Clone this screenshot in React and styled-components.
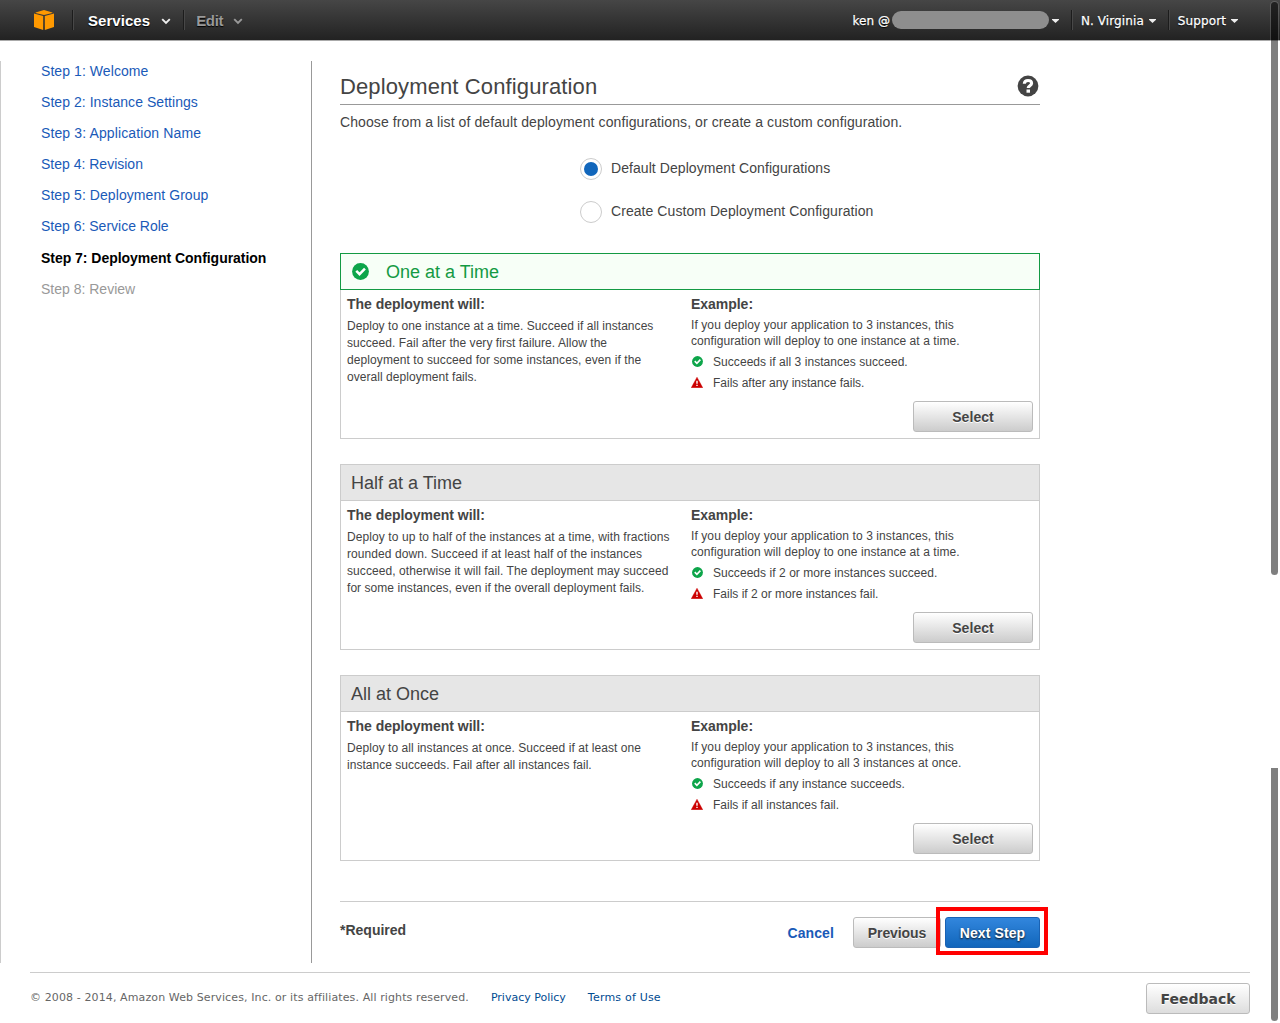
import React from "react";
import styled, { createGlobalStyle, css } from "styled-components";

const GlobalStyle = createGlobalStyle`
  *, *::before, *::after { box-sizing: border-box; }
  body {
    margin: 0;
    background: #fff;
    color: #444;
    font-family: "Liberation Sans", Helvetica, Arial, sans-serif;
    font-size: 14px;
    overflow: hidden;
  }
  h1, h2, h3, p, ul { margin: 0; padding: 0; font-weight: normal; }
  button { font-family: inherit; }
`;

const Page = styled.div`
  position: relative;
  width: 1280px;
  height: 1023px;
  display: flex;
  flex-direction: column;
`;

/* ---------- top bar ---------- */

const TopBar = styled.header`
  display: flex;
  align-items: center;
  justify-content: space-between;
  height: 41px;
  padding: 0 42px 1px 34px;
  background: linear-gradient(#464646, #222);
  border-bottom: 1px solid #aaa;
  flex: none;
`;

const NavGroup = styled.nav`
  display: flex;
  align-items: center;
  height: 40px;
`;

const NavDivider = styled.span`
  width: 2px;
  height: 20px;
  margin: 0 ${(p) => p.$after}px 0 ${(p) => p.$before}px;
  border-left: 1px solid #1c1c1c;
  border-right: 1px solid #484848;
`;

const MenuLabel = styled.span`
  font-weight: bold;
  font-size: 15px;
  line-height: 20px;
  letter-spacing: ${(p) => p.$spacing || 0}px;
  color: ${(p) => (p.$muted ? "#999" : "#fff")};
  text-shadow: 0 1px 1px #000;
  padding-top: 2px;
`;

const AccountLabel = styled.span`
  font-family: "DejaVu Sans", Verdana, sans-serif;
  font-size: 12px;
  line-height: 20px;
  padding-top: 2px;
  letter-spacing: ${(p) => p.$spacing || 0}px;
  color: #fff;
  text-shadow: 0 1px 1px #000;
  -webkit-text-stroke: 0.25px #fff;
`;

const Redacted = styled.span`
  width: 157px;
  height: 18px;
  margin: 1px 3px 0 2px;
  border-radius: 9px;
  background: #8e8e8e;
`;

const Icon = styled.svg`
  display: block;
  flex: none;
`;

const Logo = styled(Icon)`
  margin-top: 1px;
`;

const ChevronIcon = styled(Icon)`
  margin-left: ${(p) => p.$gap}px;
  margin-top: 3px;
`;

const CaretIcon = styled(Icon)`
  margin-left: ${(p) => p.$gap || 0}px;
  margin-top: 2px;
`;

const Chevron = ({ color, gap }) => (
  <ChevronIcon width="10" height="7" viewBox="0 0 10 7" $gap={gap}>
    <path d="M1.2 1.2L5 5l3.8-3.8" fill="none" stroke={color} strokeWidth="1.9" />
  </ChevronIcon>
);

const Caret = ({ gap }) => (
  <CaretIcon width="7" height="4" viewBox="0 0 7 4" $gap={gap}>
    <path d="M0 0h7v.8L3.5 4 0 .8z" fill="#eee" />
  </CaretIcon>
);

const CubeLogo = () => (
  <Logo width="20" height="20" viewBox="0 0 20 20">
    <g fill="#f90">
      <path d="M10 0l8.400 2.400v.5L10 5 1.600 2.900v-.5z" />
      <path d="M0 3.600l9.200 2.500V20L0 17z" />
      <path d="M20 3.600l-9.200 2.500V20L20 17z" />
    </g>
  </Logo>
);

/* ---------- wizard layout ---------- */

const Wizard = styled.main`
  display: flex;
  height: 902px;
  margin-top: 20px;
  flex: none;
`;

const Sidebar = styled.ul`
  width: 312px;
  padding-left: 40px;
  border-left: 1px solid #ccc;
  border-right: 1px solid #999;
  list-style: none;
  display: flex;
  flex-direction: column;
  gap: 10px;
`;

const Step = styled.li`
  height: 21px;
  line-height: 21px;
  white-space: nowrap;
  letter-spacing: ${(p) => p.$spacing || 0}px;
  color: #1a5ab8;
  ${(p) => p.$state === "current" && css`
    margin-top: 1px;
    color: #000;
    font-weight: bold;
  `}
  ${(p) => p.$state === "disabled" && css`color: #999;`}
`;

const Content = styled.section`
  width: 700px;
  margin-left: 28px;
  display: flex;
  flex-direction: column;
`;

const TitleRow = styled.div`
  display: flex;
  align-items: center;
  justify-content: space-between;
  height: 44px;
  padding: 7px 1px 0 0;
  border-bottom: 1px solid #999;
`;

const Title = styled.h1`
  font-size: 22px;
  line-height: 28px;
  letter-spacing: 0.12px;
  padding-top: 1px;
`;

const Intro = styled.p`
  margin-top: 8px;
  line-height: 18px;
  letter-spacing: 0.1px;
`;

const Choices = styled.div`
  display: flex;
  flex-direction: column;
  gap: 21px;
  margin: 27px 0 0 240px;
`;

const Choice = styled.label`
  display: flex;
  align-items: center;
  gap: 9px;
  height: 22px;
`;

const ChoiceText = styled.span`
  padding-bottom: 2px;
  white-space: nowrap;
  letter-spacing: 0.065px;
`;

const Radio = styled.span`
  display: grid;
  place-items: center;
  width: 22px;
  height: 22px;
  border: 1px solid #ccc;
  border-radius: 50%;
  background: #fff;
`;

const RadioDot = styled.span`
  width: 14px;
  height: 14px;
  border-radius: 50%;
  background: #1166bb;
`;

/* ---------- deployment cards ---------- */

const CardList = styled.div`
  display: flex;
  flex-direction: column;
  gap: 25px;
  margin-top: 30px;
`;

const Card = styled.article`
  display: flex;
  flex-direction: column;
  height: 186px;
`;

const CardHeader = styled.header`
  display: flex;
  align-items: center;
  gap: 16px;
  height: 37px;
  padding: 0 10px 0 ${(p) => (p.$selected ? 11 : 10)}px;
  border: 1px solid ${(p) => (p.$selected ? "#139a43" : "#ccc")};
  background: ${(p) => (p.$selected ? "#f7fff7" : "#e6e6e6")};
  color: ${(p) => (p.$selected ? "#139a43" : "#444")};

  svg { margin: 0 1px 1px 0; }
`;

const CardTitle = styled.h2`
  font-size: 18px;
  line-height: 24px;
`;

const CardBody = styled.div`
  flex: 1;
  display: flex;
  padding: 5px 6px 6px;
  border: 1px solid #ccc;
  border-top: 0;
`;

const Behaviour = styled.div`
  width: 344px;
`;

const Example = styled.div`
  flex: 1;
  display: flex;
  flex-direction: column;
`;

const Heading = styled.h3`
  font-size: 14px;
  font-weight: bold;
  line-height: 18px;
  letter-spacing: -0.03px;
`;

const TextLine = styled.p`
  font-size: 12px;
  line-height: ${(p) => p.$leading}px;
  letter-spacing: ${(p) => p.$spacing || 0}px;
  white-space: nowrap;
`;

const TextBlock = styled.div`
  padding-top: ${(p) => p.$top}px;
`;

const Outcomes = styled.div`
  display: flex;
  flex-direction: column;
  padding-top: 2px;
`;

const Outcome = styled.div`
  display: flex;
  align-items: center;
  height: 21px;
`;

const OutcomeIcon = styled.span`
  display: grid;
  place-items: center;
  width: 12px;
  margin-right: 10px;
`;

const Button = styled.button`
  height: 31px;
  width: ${(p) => p.$width}px;
  padding: 0;
  border: 1px solid #bbb;
  border-radius: 3px;
  background: linear-gradient(#fff, #ccc);
  color: #444;
  font-size: 14px;
  font-weight: bold;
  letter-spacing: ${(p) => p.$spacing || 0}px;
  text-shadow: 0 1px 0 #fff;
  flex: none;
  ${(p) => p.$primary && css`
    border-color: #1a62b3;
    background: linear-gradient(#3286dd, #1166bb);
    color: #fff;
    text-shadow: 0 1px 2px #111;
  `}
`;

const SelectButton = styled(Button)`
  align-self: flex-end;
  margin-top: auto;
`;

const CheckCircle = ({ size }) => (
  <Icon width={size} height={size} viewBox="0 0 18 18">
    <circle cx="9" cy="9" r="8.900" fill="#0da54a" />
    <path d="M4.500 8.300l3.500 3.500 5.700-5.800" fill="none" stroke="#fff" strokeWidth="2.700" />
  </Icon>
);

const Warning = () => (
  <Icon width="12" height="11" viewBox="0 0 12 11">
    <path d="M6 0.200L11.800 10.800H.2z" fill="#c00" stroke="#c00" strokeWidth=".4" strokeLinejoin="round" />
    <path d="M5.300 3.800h1.400v3H5.300zM5.300 7.800h1.400v1.300H5.300z" fill="#fff" />
  </Icon>
);

const HelpIcon = () => (
  <Icon width="22" height="22" viewBox="0 0 22 22">
    <circle cx="11" cy="11" r="10.400" fill="#444" />
    <path d="M7.300 8.700c.1-2.200 1.500-3.200 3.700-3.200s3.600 1 3.600 2.700c0 2.500-3.400 2.400-3.400 4.900" fill="none" stroke="#fff" strokeWidth="3.100" />
    <path d="M9.500 14.500h3.500v3.200H9.500z" fill="#fff" />
  </Icon>
);

/* ---------- wizard actions ---------- */

const ActionRow = styled.div`
  display: flex;
  justify-content: space-between;
  margin-top: 40px;
  padding-top: 15px;
  border-top: 1px solid #ccc;
  font-weight: bold;
`;

const Required = styled.span`
  padding-top: 4px;
  line-height: 18px;
`;

const Actions = styled.div`
  display: flex;
  align-items: center;
`;

const CancelLink = styled.a`
  margin-right: 19px;
  letter-spacing: 0.1px;
  color: #1a5ab8;
`;

const NextWrap = styled.div`
  position: relative;
  margin-left: 4px;
`;

const Highlight = styled.span`
  position: absolute;
  inset: -10px -8px -7px -9px;
  border: 4px solid #f00;
`;

/* ---------- footer ---------- */

const Footer = styled.footer`
  display: flex;
  align-items: flex-start;
  margin: 9px 30px 0;
  border-top: 1px solid #ccc;
  font-family: "DejaVu Sans", Verdana, sans-serif;
  font-size: 11px;
  color: #666;
`;

const FooterText = styled.span`
  margin: 16px 22px 0 0;
  line-height: 17px;
  letter-spacing: ${(p) => p.$spacing || 0}px;
  white-space: nowrap;
  ${(p) => p.$link && css`color: #004b91;`}
`;

const FeedbackButton = styled(Button)`
  margin: 10px 0 0 auto;
  background: linear-gradient(#fff, #ddd);
  font-family: "DejaVu Sans", Verdana, sans-serif;
`;

const ScrollThumb = styled.span`
  position: absolute;
  right: 2px;
  top: ${(p) => p.$top}px;
  width: 7px;
  height: ${(p) => p.$height}px;
  border-radius: ${(p) => (p.$flatTop ? "0 0 4px 4px" : "4px")};
  background: rgba(0, 0, 0, 0.5);
  box-shadow: 0 0 0 1px rgba(255, 255, 255, 0.15);
`;

const steps = [
  { text: "Step 1: Welcome", spacing: 0.07 },
  { text: "Step 2: Instance Settings", spacing: 0.05 },
  { text: "Step 3: Application Name", spacing: 0.12 },
  { text: "Step 4: Revision", spacing: 0 },
  { text: "Step 5: Deployment Group", spacing: 0.07 },
  { text: "Step 6: Service Role", spacing: 0 },
  { text: "Step 7: Deployment Configuration", spacing: -0.03, state: "current" },
  { text: "Step 8: Review", spacing: 0, state: "disabled" },
];

const configurations = [
  {
    title: "One at a Time",
    selected: true,
    behaviour: [
      ["Deploy to one instance at a time. Succeed if all instances", 0.05],
      ["succeed. Fail after the very first failure. Allow the", 0.05],
      ["deployment to succeed for some instances, even if the", 0.09],
      ["overall deployment fails.", 0.05],
    ],
    example: [
      ["If you deploy your application to 3 instances, this", 0.09],
      ["configuration will deploy to one instance at a time.", 0.075],
    ],
    success: "Succeeds if all 3 instances succeed.",
    failure: "Fails after any instance fails.",
  },
  {
    title: "Half at a Time",
    behaviour: [
      ["Deploy to up to half of the instances at a time, with fractions", 0.09],
      ["rounded down. Succeed if at least half of the instances", 0.075],
      ["succeed, otherwise it will fail. The deployment may succeed", 0.07],
      ["for some instances, even if the overall deployment fails.", 0.045],
    ],
    example: [
      ["If you deploy your application to 3 instances, this", 0.09],
      ["configuration will deploy to one instance at a time.", 0.075],
    ],
    success: "Succeeds if 2 or more instances succeed.",
    failure: "Fails if 2 or more instances fail.",
  },
  {
    title: "All at Once",
    behaviour: [
      ["Deploy to all instances at once. Succeed if at least one", 0.055],
      ["instance succeeds. Fail after all instances fail.", 0.025],
    ],
    example: [
      ["If you deploy your application to 3 instances, this", 0.09],
      ["configuration will deploy to all 3 instances at once.", 0.08],
    ],
    success: "Succeeds if any instance succeeds.",
    failure: "Fails if all instances fail.",
  },
];

const ConfigurationCard = ({ config }) => (
  <Card>
    <CardHeader $selected={config.selected}>
      {config.selected && <CheckCircle size={17} />}
      <CardTitle>{config.title}</CardTitle>
    </CardHeader>
    <CardBody>
      <Behaviour>
        <Heading>The deployment will:</Heading>
        <TextBlock $top={5}>
          {config.behaviour.map(([line, spacing]) => (
            <TextLine key={line} $leading={17} $spacing={spacing}>{line}</TextLine>
          ))}
        </TextBlock>
      </Behaviour>
      <Example>
        <Heading>Example:</Heading>
        <TextBlock $top={4}>
          {config.example.map(([line, spacing]) => (
            <TextLine key={line} $leading={16} $spacing={spacing}>{line}</TextLine>
          ))}
        </TextBlock>
        <Outcomes>
          <Outcome>
            <OutcomeIcon><CheckCircle size={11} /></OutcomeIcon>
            <TextLine $leading={16} $spacing={0.055}>{config.success}</TextLine>
          </Outcome>
          <Outcome>
            <OutcomeIcon><Warning /></OutcomeIcon>
            <TextLine $leading={16}>{config.failure}</TextLine>
          </Outcome>
        </Outcomes>
        <SelectButton $width={120} $spacing={0.05}>Select</SelectButton>
      </Example>
    </CardBody>
  </Card>
);

export default function App() {
  return (
    <Page>
      <GlobalStyle />
      <TopBar>
        <NavGroup>
          <CubeLogo />
          <NavDivider $before={18} $after={14} />
          <MenuLabel $spacing={0.05}>Services</MenuLabel>
          <Chevron color="#eee" gap={11} />
          <NavDivider $before={12} $after={11} />
          <MenuLabel $muted $spacing={-0.3}>Edit</MenuLabel>
          <Chevron color="#999" gap={10} />
        </NavGroup>
        <NavGroup>
          <AccountLabel>ken @</AccountLabel>
          <Redacted />
          <Caret />
          <NavDivider $before={12} $after={8} />
          <AccountLabel $spacing={0.1}>N. Virginia</AccountLabel>
          <Caret gap={5} />
          <NavDivider $before={12} $after={8} />
          <AccountLabel $spacing={0.1}>Support</AccountLabel>
          <Caret gap={5} />
        </NavGroup>
      </TopBar>
      <Wizard>
        <Sidebar>
          {steps.map((step) => (
            <Step key={step.text} $state={step.state} $spacing={step.spacing}>{step.text}</Step>
          ))}
        </Sidebar>
        <Content>
          <TitleRow>
            <Title>Deployment Configuration</Title>
            <HelpIcon />
          </TitleRow>
          <Intro>Choose from a list of default deployment configurations, or create a custom configuration.</Intro>
          <Choices>
            <Choice>
              <Radio><RadioDot /></Radio>
              <ChoiceText>Default Deployment Configurations</ChoiceText>
            </Choice>
            <Choice>
              <Radio />
              <ChoiceText>Create Custom Deployment Configuration</ChoiceText>
            </Choice>
          </Choices>
          <CardList>
            {configurations.map((config) => (
              <ConfigurationCard key={config.title} config={config} />
            ))}
          </CardList>
          <ActionRow>
            <Required>*Required</Required>
            <Actions>
              <CancelLink>Cancel</CancelLink>
              <Button $width={88} $spacing={-0.1}>Previous</Button>
              <NextWrap>
                <Button $width={95} $primary $spacing={0.1}>Next Step</Button>
                <Highlight />
              </NextWrap>
            </Actions>
          </ActionRow>
        </Content>
      </Wizard>
      <Footer>
        <FooterText $spacing={0.11}>© 2008 - 2014, Amazon Web Services, Inc. or its affiliates. All rights reserved.</FooterText>
        <FooterText $link>Privacy Policy</FooterText>
        <FooterText $link $spacing={0.2}>Terms of Use</FooterText>
        <FeedbackButton $width={104}>Feedback</FeedbackButton>
      </Footer>
      <ScrollThumb $top={2} $height={573} />
      <ScrollThumb $top={768} $height={253} $flatTop />
    </Page>
  );
}
